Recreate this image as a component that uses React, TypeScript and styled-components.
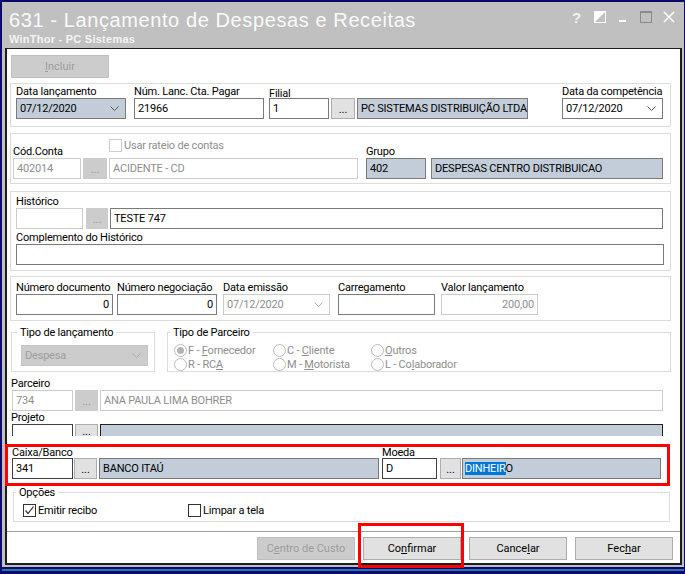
import React from "react";
import styled, { createGlobalStyle, css } from "styled-components";

const Colors = {
  navy: "#0b0b6c",
  chrome: "#c0c0c0",
  white: "#ffffff",
  line: "#dcdcdc",
  border: "#7a7a7a",
  dark: "#404040",
  disabledBorder: "#cccccc",
  disabledText: "#8e8e8e",
  info: "#c2cdd9",
  button: "#e1e1e1",
  buttonBorder: "#adadad",
  red: "#ff0000",
  select: "#0078d7",
};

type Variant = "normal" | "info" | "disabled" | "dark" | "grey";

const GlobalStyle = createGlobalStyle`
  body {
    margin: 0;
    background: ${Colors.navy};
  }
  * {
    box-sizing: border-box;
  }
`;

const Screen = styled.div`
  width: 685px;
  height: 574px;
  background: ${Colors.navy};
  padding: 2px 1px 0 2px;
  display: flex;
  flex-direction: column;
  overflow: hidden;
  font-family: "Liberation Sans", Arial, sans-serif;
  color: #000;
`;

const Window = styled.div`
  height: 565px;
  background: ${Colors.chrome};
  display: flex;
  flex-direction: column;
  padding: 0 2px 2px 3px;
`;

const TaskStrip = styled.div`
  height: 2px;
  margin-top: 2px;
  background: #3a9fd0;
  opacity: 0.7;
`;

const TitleBar = styled.div`
  height: 46px;
  display: flex;
  justify-content: space-between;
  padding: 6px 2px 0 4px;
`;

const TitleText = styled.div`
  display: flex;
  flex-direction: column;
`;

const Title = styled.div`
  font-size: 20px;
  line-height: 24px;
  letter-spacing: 0.6px;
  color: #fafafa;
`;

const Subtitle = styled.div`
  font-size: 11px;
  line-height: 13px;
  font-weight: bold;
  letter-spacing: 0.25px;
  margin-top: 1px;
  color: #f4f4f4;
`;

const WindowButtons = styled.div`
  display: flex;
  padding-top: 2px;
`;

const IconSlot = styled.div`
  width: 23px;
  height: 14px;
  display: flex;
  align-items: center;
  justify-content: center;
  font-weight: bold;
  font-size: 15px;
  color: #f2f2f2;
`;

const Client = styled.div`
  flex: 1;
  background: ${Colors.white};
  border: 2px solid #1e1e1e;
  border-top-width: 1px;
  display: flex;
  flex-direction: column;
  font-family: Roboto, "Liberation Sans", Arial, sans-serif;
  font-size: 11px;
  letter-spacing: -0.2px;
`;

const Body = styled.div`
  display: flex;
  flex-direction: column;
  padding: 0 9px 0 3px;
`;

const Toolbar = styled.div`
  display: flex;
  margin-top: 6px;
  padding-left: 1px;
`;

const PushButton = styled.div<{ $disabled?: boolean }>`
  width: 98px;
  height: 23px;
  display: flex;
  align-items: center;
  justify-content: center;
  background: ${Colors.button};
  border: 1px solid ${Colors.buttonBorder};
  letter-spacing: 0;
  ${({ $disabled }) =>
    $disabled &&
    css`
      background: #cccccc;
      border-color: #bfbfbf;
      color: #9c9c9c;
    `}
`;

const U = styled.span`
  text-decoration: underline;
`;

const Panel = styled.div<{ $pad: string; $mt: number }>`
  border: 1px solid ${Colors.line};
  padding: ${({ $pad }) => $pad};
  margin-top: ${({ $mt }) => $mt}px;
  display: flex;
  flex-direction: column;
`;

const Row = styled.div<{ $gap?: number; $ml?: number; $mr?: number }>`
  display: flex;
  align-items: flex-end;
  gap: ${({ $gap }) => $gap ?? 2}px;
  margin-left: ${({ $ml }) => $ml ?? 0}px;
  margin-right: ${({ $mr }) => $mr ?? 0}px;
`;

const FieldCol = styled.div<{ $ml?: number; $auto?: boolean }>`
  display: flex;
  flex-direction: column;
  margin-left: ${({ $ml, $auto }) => ($auto ? "auto" : `${$ml ?? 0}px`)};
`;

const Label = styled.div<{ $mt?: number; $lh?: number; $pl?: number }>`
  height: ${({ $lh }) => $lh ?? 13}px;
  line-height: ${({ $lh }) => $lh ?? 13}px;
  margin-top: ${({ $mt }) => $mt ?? 0}px;
  padding-left: ${({ $pl }) => $pl ?? 0}px;
  white-space: nowrap;
`;

// $cut: the control is partly hidden by the panel below it (no bottom edge)
const cutEdge = css`
  height: 12px;
  border-bottom-width: 0;
`;

const Input = styled.div<{
  $w?: number;
  $block?: boolean;
  $variant?: Variant;
  $right?: boolean;
  $cut?: boolean;
}>`
  height: 21px;
  width: ${({ $w }) => ($w ? `${$w}px` : "auto")};
  flex: ${({ $w, $block }) => ($w || $block ? "none" : "1 1 0")};
  min-width: 0;
  display: flex;
  align-items: center;
  justify-content: ${({ $right }) => ($right ? "flex-end" : "space-between")};
  padding: 0 3px 0 3px;
  border: 1px solid ${Colors.border};
  background: ${Colors.white};
  white-space: nowrap;
  overflow: hidden;
  ${({ $variant }) => {
    switch ($variant) {
      case "info":
        return css`
          background: ${Colors.info};
        `;
      case "disabled":
        return css`
          border-color: ${Colors.disabledBorder};
          color: ${Colors.disabledText};
        `;
      case "dark":
        return css`
          border-color: ${Colors.dark};
        `;
      case "grey":
        return css`
          border-color: #c4c4c4;
          background: #cccccc;
          color: #9c9c9c;
        `;
      default:
        return "";
    }
  }}
  ${({ $cut }) => $cut && cutEdge}
`;

const DotsButton = styled.div<{ $w: number; $disabled?: boolean; $cut?: boolean }>`
  width: ${({ $w }) => $w}px;
  height: 21px;
  flex: none;
  display: flex;
  align-items: center;
  justify-content: center;
  background: ${Colors.button};
  border: 1px solid ${Colors.buttonBorder};
  letter-spacing: 0;
  padding-top: 1px;
  overflow: hidden;
  ${({ $disabled }) =>
    $disabled &&
    css`
      background: #cccccc;
      border-color: #cccccc;
      color: #9a9a9a;
    `}
  ${({ $cut }) => $cut && cutEdge}
`;

const CheckRow = styled.div<{ $h?: number; $w?: number; $disabled?: boolean }>`
  height: ${({ $h }) => $h ?? 13}px;
  width: ${({ $w }) => ($w ? `${$w}px` : "auto")};
  display: flex;
  align-items: flex-start;
  gap: 2px;
  line-height: 13px;
  white-space: nowrap;
  color: ${({ $disabled }) => ($disabled ? Colors.disabledText : "#000")};
`;

const Box = styled.div<{ $disabled?: boolean }>`
  width: 13px;
  height: 13px;
  flex: none;
  border: 1px solid ${({ $disabled }) => ($disabled ? Colors.disabledBorder : "#333")};
  background: ${Colors.white};
  display: flex;
  align-items: center;
  justify-content: center;
`;

const FieldsetRow = styled.div`
  display: flex;
  gap: 12px;
  margin-top: 5px;
  padding-left: 1px;
`;

const Fieldset = styled.fieldset<{ $pad: string; $w?: number }>`
  margin: 0;
  min-width: 0;
  border: 1px solid ${Colors.line};
  padding: ${({ $pad }) => $pad};
  width: ${({ $w }) => ($w ? `${$w}px` : "auto")};
  flex: ${({ $w }) => ($w ? "none" : "1")};
`;

const Legend = styled.legend<{ $ml: number }>`
  padding: 0 3px;
  margin-left: ${({ $ml }) => $ml}px;
  line-height: 13px;
  font-size: 11px;
  white-space: nowrap;
`;

const RadioGrid = styled.div`
  display: grid;
  grid-template-columns: 99px 98px auto;
  grid-auto-rows: 13px;
  row-gap: 1px;
  color: ${Colors.disabledText};
`;

const Radio = styled.div`
  display: flex;
  align-items: center;
  gap: 1px;
  white-space: nowrap;
`;

const Circle = styled.div<{ $on?: boolean }>`
  width: 13px;
  height: 13px;
  border-radius: 50%;
  border: 1px solid #bcbcbc;
  background: ${Colors.white};
  display: flex;
  align-items: center;
  justify-content: center;
  &::after {
    content: "";
    display: ${({ $on }) => ($on ? "block" : "none")};
    width: 7px;
    height: 7px;
    border-radius: 50%;
    background: #b4b4b4;
  }
`;

const CaixaBox = styled.div`
  margin: 8px 1px 0 -5px;
  border: 3px solid ${Colors.red};
  padding: 0 6px 4px 4px;
`;

const Selected = styled.span`
  background: ${Colors.select};
  color: ${Colors.white};
`;

const ButtonBar = styled.div`
  margin-top: auto;
  height: 32px;
  border-top: 1px solid #a0a0a0;
  display: flex;
  justify-content: flex-end;
  gap: 8px;
  padding: 5px 7px 0 0;
`;

const MarkWrap = styled.div`
  position: relative;
`;

const RedMark = styled.div`
  position: absolute;
  left: -5px;
  right: -3px;
  top: -14px;
  bottom: -5px;
  border: 3px solid ${Colors.red};
  pointer-events: none;
`;

const Chevron: React.FC<{ color?: string }> = ({ color = "#555" }) => (
  <svg width="9" height="5" viewBox="0 0 9 5">
    <polyline points="0.5,0.5 4.5,4.5 8.5,0.5" fill="none" stroke={color} strokeWidth="1" />
  </svg>
);

const Check = () => (
  <svg width="11" height="11" viewBox="0 0 11 11">
    <polyline points="1.5,5.5 4,8.5 9.5,1.5" fill="none" stroke="#333" strokeWidth="1.2" />
  </svg>
);

const Combo: React.FC<{ w: number; value: string; variant?: Variant; chevron?: string }> = ({
  w,
  value,
  variant,
  chevron,
}) => (
  <Input $w={w} $variant={variant} style={{ paddingRight: 6 }}>
    <span>{value}</span>
    <Chevron color={chevron} />
  </Input>
);

const App: React.FC = () => {
  return (
    <Screen>
      <GlobalStyle />
      <Window>
        <TitleBar>
          <TitleText>
            <Title>631 - Lançamento de Despesas e Receitas</Title>
            <Subtitle>WinThor - PC Sistemas</Subtitle>
          </TitleText>
          <WindowButtons>
            <IconSlot>?</IconSlot>
            <IconSlot>
              <svg width="12" height="12" viewBox="0 0 12 12">
                <rect x="0.5" y="0.5" width="11" height="11" fill="none" stroke="#fff" />
                <polygon points="0,0 12,0 0,12" fill="#fff" />
              </svg>
            </IconSlot>
            <IconSlot>
              <svg width="10" height="12" viewBox="0 0 10 12">
                <rect x="1" y="9" width="7" height="2" fill="#fff" />
              </svg>
            </IconSlot>
            <IconSlot>
              <svg width="12" height="12" viewBox="0 0 12 12">
                <rect x="0.5" y="0.5" width="11" height="11" fill="none" stroke="#8a8a8a" />
                <rect x="0" y="0" width="12" height="2" fill="#8a8a8a" />
              </svg>
            </IconSlot>
            <IconSlot>
              <svg width="12" height="12" viewBox="0 0 12 12">
                <path d="M1 1 L11 11 M11 1 L1 11" stroke="#fff" strokeWidth="1.6" />
              </svg>
            </IconSlot>
          </WindowButtons>
        </TitleBar>

        <Client>
          <Body>
            <Toolbar>
              <PushButton $disabled>
                <span>
                  <U>I</U>ncluir
                </span>
              </PushButton>
            </Toolbar>

            <Panel $pad="1px 7px 7px 5px" $mt={5}>
              <Row $gap={0}>
                <FieldCol>
                  <Label>Data lançamento</Label>
                  <Combo w={110} value="07/12/2020" variant="info" />
                </FieldCol>
                <FieldCol $ml={8}>
                  <Label>Núm. Lanc. Cta. Pagar</Label>
                  <Input $w={130}>21966</Input>
                </FieldCol>
                <FieldCol $ml={5}>
                  <Label style={{ paddingTop: 2 }}>Filial</Label>
                  <Row>
                    <Input $w={60}>1</Input>
                    <DotsButton $w={24}>...</DotsButton>
                    <Input $w={171} $variant="info">
                      PC SISTEMAS DISTRIBUIÇÃO LTDA
                    </Input>
                  </Row>
                </FieldCol>
                <FieldCol $auto>
                  <Label>Data da competência</Label>
                  <Combo w={101} value="07/12/2020" />
                </FieldCol>
              </Row>
            </Panel>

            <Panel $pad="5px 7px 4px 2px" $mt={6}>
              <Row $gap={2}>
                <FieldCol>
                  <Label>Cód.Conta</Label>
                  <Input $w={68} $variant="disabled">
                    402014
                  </Input>
                </FieldCol>
                <DotsButton $w={24} $disabled>
                  ...
                </DotsButton>
                <FieldCol>
                  <CheckRow $h={17} $disabled style={{ marginBottom: 2 }}>
                    <Box $disabled />
                    <span>Usar rateio de contas</span>
                  </CheckRow>
                  <Input $w={249} $variant="disabled">
                    ACIDENTE - CD
                  </Input>
                </FieldCol>
                <FieldCol $ml={6}>
                  <Label>Grupo</Label>
                  <Row $gap={5}>
                    <Input $w={60} $variant="info">
                      402
                    </Input>
                    <Input $w={232} $variant="info">
                      DESPESAS CENTRO DISTRIBUICAO
                    </Input>
                  </Row>
                </FieldCol>
              </Row>
            </Panel>

            <Panel $pad="3px 6px 5px 5px" $mt={7}>
              <Label>Histórico</Label>
              <Row $gap={3}>
                <Input $w={67} $variant="disabled" />
                <DotsButton $w={22} $disabled>
                  ...
                </DotsButton>
                <Input style={{ marginLeft: -1, marginRight: 1 }}>TESTE 747</Input>
              </Row>
              <Label $mt={2}>Complemento do Histórico</Label>
              <Input $block />
            </Panel>

            <Panel $pad="4px 7px 5px 5px" $mt={5}>
              <Row $gap={0}>
                <FieldCol>
                  <Label>Número documento</Label>
                  <Input $w={97} $right>
                    0
                  </Input>
                </FieldCol>
                <FieldCol $ml={4}>
                  <Label>Número negociação</Label>
                  <Input $w={100} $right>
                    0
                  </Input>
                </FieldCol>
                <FieldCol $ml={6}>
                  <Label>Data emissão</Label>
                  <Combo w={107} value="07/12/2020" variant="disabled" chevron="#b0b0b0" />
                </FieldCol>
                <FieldCol $ml={8}>
                  <Label>Carregamento</Label>
                  <Input $w={97} />
                </FieldCol>
                <FieldCol $ml={6}>
                  <Label>Valor lançamento</Label>
                  <Input $w={97} $right $variant="disabled">
                    200,00
                  </Input>
                </FieldCol>
              </Row>
            </Panel>

            <FieldsetRow>
              <Fieldset $pad="6px 6px 4px 9px" $w={144}>
                <Legend $ml={-4}>Tipo de lançamento</Legend>
                <Combo w={127} value="Despesa" variant="grey" chevron="#b0b0b0" />
              </Fieldset>
              <Fieldset $pad="5px 6px 0 6px">
                <Legend $ml={-4}>Tipo de Parceiro</Legend>
                <RadioGrid>
                  <Radio>
                    <Circle $on />
                    <span>
                      F - <U>F</U>ornecedor
                    </span>
                  </Radio>
                  <Radio>
                    <Circle />
                    <span>
                      C - <U>C</U>liente
                    </span>
                  </Radio>
                  <Radio>
                    <Circle />
                    <span>
                      <U>O</U>utros
                    </span>
                  </Radio>
                  <Radio>
                    <Circle />
                    <span>
                      R - RC<U>A</U>
                    </span>
                  </Radio>
                  <Radio>
                    <Circle />
                    <span>
                      M - <U>M</U>otorista
                    </span>
                  </Radio>
                  <Radio>
                    <Circle />
                    <span>
                      L - Co<U>l</U>aborador
                    </span>
                  </Radio>
                </RadioGrid>
              </Fieldset>
            </FieldsetRow>

            <Label $mt={5} $pl={1}>
              Parceiro
            </Label>
            <Row $ml={2} $mr={8}>
              <Input $w={61} $variant="disabled">
                734
              </Input>
              <DotsButton $w={23} $disabled>
                ...
              </DotsButton>
              <Input $variant="disabled">ANA PAULA LIMA BOHRER</Input>
            </Row>

            <Label $pl={1}>Projeto</Label>
            <Row $ml={2} $mr={8} style={{ alignItems: "flex-start" }}>
              <Input $w={61} $variant="dark" $cut />
              <DotsButton $w={23} $cut>
                ...
              </DotsButton>
              <Input $variant="info" $cut style={{ borderColor: "#222" }} />
            </Row>

            <CaixaBox>
              <Row $gap={0}>
                <FieldCol>
                  <Label $lh={11}>Caixa/Banco</Label>
                  <Row>
                    <Input $w={61} $variant="dark">
                      341
                    </Input>
                    <DotsButton $w={23} style={{ marginLeft: -1 }}>
                      ...
                    </DotsButton>
                    <Input $w={280} $variant="info">
                      BANCO ITAÚ
                    </Input>
                  </Row>
                </FieldCol>
                <FieldCol $ml={3} style={{ flex: 1 }}>
                  <Label $lh={11}>Moeda</Label>
                  <Row>
                    <Input $w={55} $variant="dark">
                      D
                    </Input>
                    <DotsButton $w={21} style={{ marginLeft: 1 }}>
                      ...
                    </DotsButton>
                    <Input $variant="info" style={{ paddingLeft: 2, marginLeft: -1 }}>
                      <span>
                        <Selected>DINHEIR</Selected>O
                      </span>
                    </Input>
                  </Row>
                </FieldCol>
              </Row>
            </CaixaBox>

            <Fieldset $pad="5px 6px 4px 9px" style={{ margin: "0 1px 0 3px" }}>
              <Legend $ml={-7}>Opções</Legend>
              <Row $gap={0}>
                <CheckRow $w={165}>
                  <Box>
                    <Check />
                  </Box>
                  <span>Emitir recibo</span>
                </CheckRow>
                <CheckRow>
                  <Box />
                  <span>Limpar a tela</span>
                </CheckRow>
              </Row>
            </Fieldset>
          </Body>

          <ButtonBar>
            <PushButton $disabled>
              <span>
                C<U>e</U>ntro de Custo
              </span>
            </PushButton>
            <MarkWrap>
              <PushButton>
                <span>
                  Co<U>n</U>firmar
                </span>
              </PushButton>
              <RedMark />
            </MarkWrap>
            <PushButton>
              <span>
                Cance<U>l</U>ar
              </span>
            </PushButton>
            <PushButton>
              <span>
                Fec<U>h</U>ar
              </span>
            </PushButton>
          </ButtonBar>
        </Client>
      </Window>
      <TaskStrip />
    </Screen>
  );
};

export default App;
